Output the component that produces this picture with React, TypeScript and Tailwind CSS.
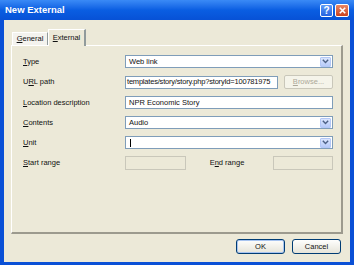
import React from 'react'

function U({ children }: { children: React.ReactNode }) {
  return <span className="underline underline-offset-[1px]">{children}</span>
}

function Arrow() {
  return (
    <div className="w-[11px] h-[10px] mr-[1px] rounded-[1px] border border-[#b4c8f6] bg-linear-to-b from-[#dbe6fe] to-[#b7cbf9] flex items-center justify-center">
      <svg width="7" height="5" viewBox="0 0 7 5">
        <path d="M0.8 0.8 L3.5 3.5 L6.2 0.8" fill="none" stroke="#4d6185" strokeWidth="1.4" />
      </svg>
    </div>
  )
}

function Select({ value }: { value: string }) {
  return (
    <div className="w-[209px] h-[13px] bg-white border border-[#7f9db9] flex items-center justify-between">
      <span className="pl-[3px]">{value}</span>
      <Arrow />
    </div>
  )
}

function Label({ children }: { children: React.ReactNode }) {
  return <div className="w-[102px] shrink-0">{children}</div>
}

export default function App() {
  return (
    <div className="w-[354px] h-[265px] bg-[#0a50d6] flex flex-col font-['Liberation_Sans',Arial,sans-serif] text-[7.5px] text-[#111] overflow-hidden">
      <div className="h-[20px] shrink-0 flex items-center justify-between pl-[5px] pr-[5px] bg-linear-to-b from-[#3a8af6] via-[#0a5ee2] to-[#0751d6]">
        <span className="text-white font-bold text-[9.5px]">New External</span>
        <div className="flex gap-[2px] mt-[1px]">
          <div className="w-[13px] h-[13px] rounded-[2px] border border-white bg-linear-to-b from-[#5f9bf8] to-[#2663e0] flex items-center justify-center text-white font-bold text-[10px] leading-none">?</div>
          <div className="w-[14px] h-[13px] rounded-[2px] border border-white bg-linear-to-b from-[#e98665] to-[#c9401c] flex items-center justify-center">
            <svg width="7" height="7" viewBox="0 0 7 7">
              <path d="M0.8 0.8 L6.2 6.2 M6.2 0.8 L0.8 6.2" stroke="white" strokeWidth="1.6" />
            </svg>
          </div>
        </div>
      </div>

      <div className="flex-1 ml-[4px] mr-[4px] mb-[3px] bg-[#ece9d8] pl-[7px] pr-[7px] pt-[9px] flex flex-col">
        <div className="flex items-end h-[16px] relative z-10">
          <div className="ml-[1px] w-[36px] h-[13px] border-t border-l border-white border-r border-r-[#919b9c] bg-[#f4f3ee] flex items-center justify-center">
            <span><U>G</U>eneral</span>
          </div>
          <div className="w-[38px] h-[17px] -mb-[1px] border-t border-l border-white border-r-2 border-r-[#919b9c] bg-[#ece9d8] flex items-center justify-center">
            <span><U>E</U>xternal</span>
          </div>
        </div>

        <div className="h-[189px] border-t border-l border-white border-r-2 border-b-2 border-r-[#9c9a8e] border-b-[#9c9a8e] pl-[11px] pr-[8px] pt-[9px] flex flex-col gap-[7px]">
          <div className="flex items-center h-[13px]">
            <Label><U>T</U>ype</Label>
            <Select value="Web link" />
          </div>
          <div className="flex items-center h-[14px]">
            <Label>U<U>R</U>L path</Label>
            <div className="w-[153px] h-[13px] bg-white border border-[#7f9db9] flex items-center whitespace-nowrap">
              <span className="pl-[1px] tracking-[-0.2px]">templates/story/story.php?storyId=100781975</span>
            </div>
            <div className="ml-[6px] w-[49px] h-[14px] rounded-[2px] border border-[#c9c7ba] bg-[#f5f4ea] flex items-center justify-center text-[#aca899]">
              <span><U>B</U>rowse...</span>
            </div>
          </div>
          <div className="flex items-center h-[13px]">
            <Label><U>L</U>ocation description</Label>
            <div className="w-[209px] h-[13px] bg-white border border-[#7f9db9] flex items-center">
              <span className="pl-[3px]">NPR Economic Story</span>
            </div>
          </div>
          <div className="flex items-center h-[13px]">
            <Label><U>C</U>ontents</Label>
            <Select value="Audio" />
          </div>
          <div className="flex items-center h-[13px]">
            <Label><U>U</U>nit</Label>
            <div className="w-[209px] h-[13px] bg-white border border-[#7f9db9] flex items-center justify-between">
              <div className="ml-[4px] w-[1px] h-[8px] bg-black" />
              <Arrow />
            </div>
          </div>
          <div className="flex items-center h-[14px]">
            <Label><U>S</U>tart range</Label>
            <div className="w-[61px] h-[14px] border border-[#c9c7ba] bg-[#ece9d8]" />
            <div className="ml-[24px] w-[64px]">E<U>n</U>d range</div>
            <div className="w-[60px] h-[14px] border border-[#c9c7ba] bg-[#ece9d8]" />
          </div>
        </div>

        <div className="mt-[5px] flex justify-end gap-[7px] pr-[2px]">
          <div className="w-[49px] h-[15px] rounded-[3px] border border-[#003c74] bg-linear-to-b from-[#fefefd] to-[#e6e4d9] flex items-center justify-center shadow-[inset_0_0_0_1px_#a8c4f0]">
            <span>OK</span>
          </div>
          <div className="w-[49px] h-[15px] rounded-[3px] border border-[#003c74] bg-linear-to-b from-[#fefefd] to-[#e6e4d9] flex items-center justify-center">
            <span>Cancel</span>
          </div>
        </div>
      </div>
    </div>
  )
}
